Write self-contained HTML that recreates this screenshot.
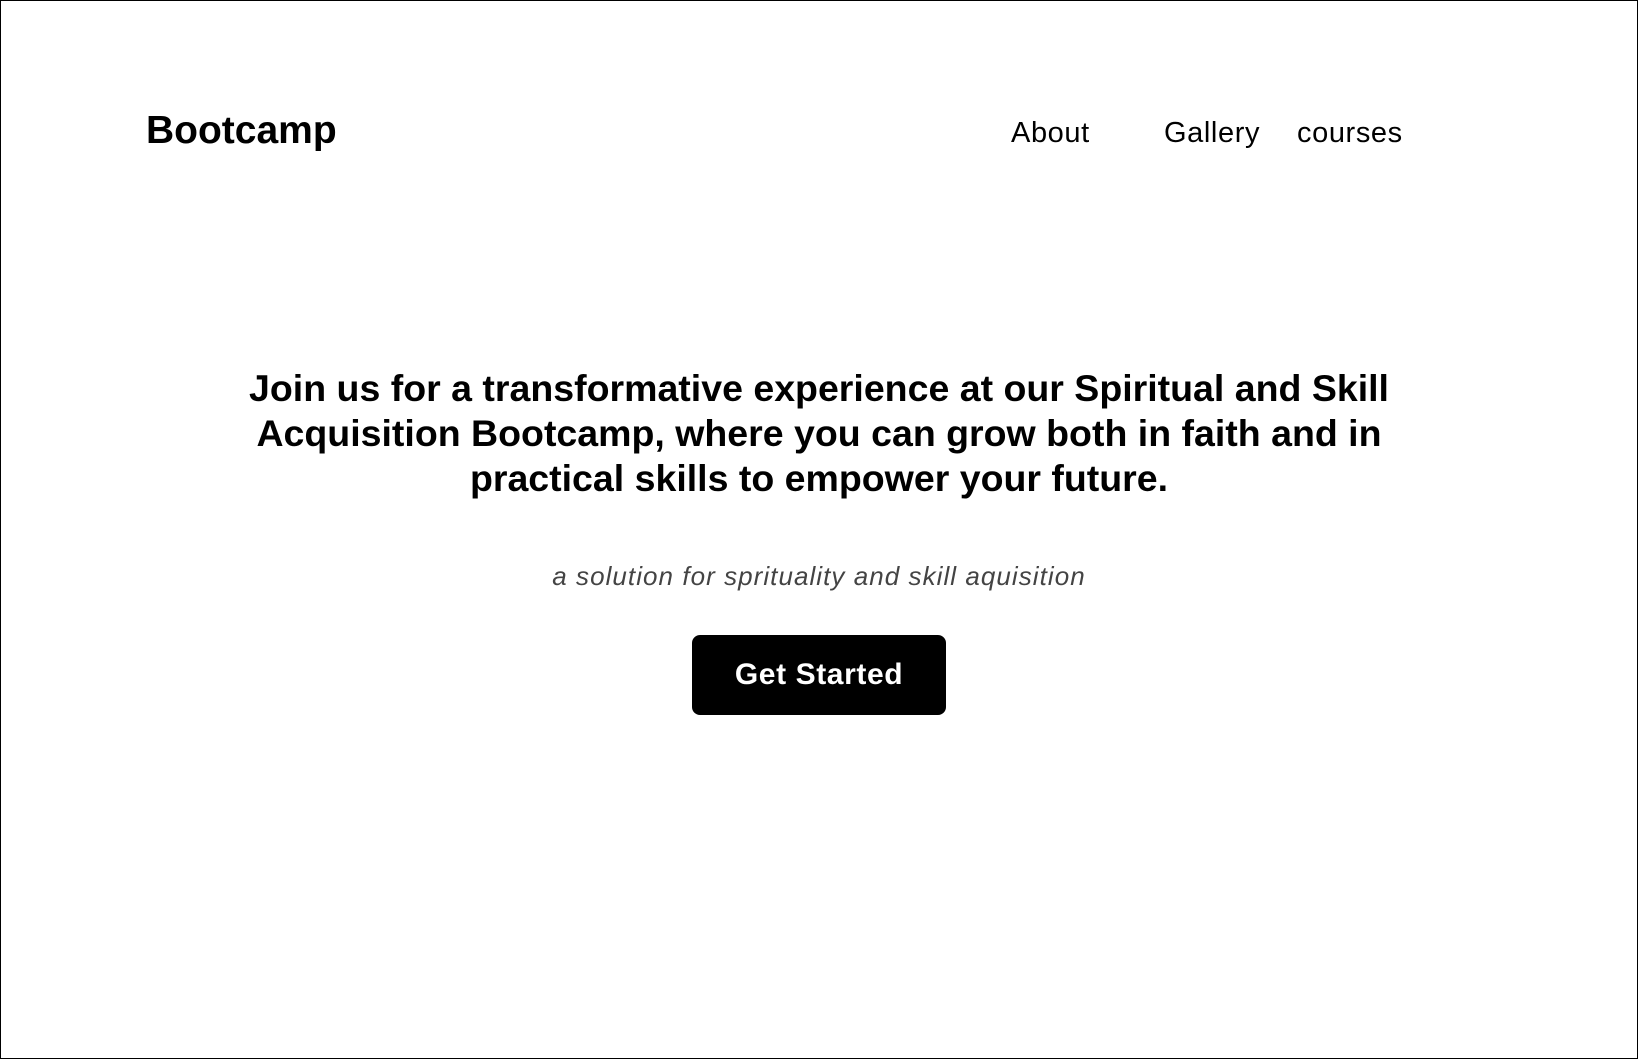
<!DOCTYPE html>
<html><head><meta charset="utf-8"><style>
html,body{margin:0;padding:0;background:#fff;}
body{width:1638px;height:1059px;position:relative;overflow:hidden;font-family:"Liberation Sans",sans-serif;color:#000;}
.frame{position:absolute;left:0;top:0;width:1636px;height:1057px;border:1px solid #000;}
.logo{position:absolute;left:146px;top:107px;font-size:39px;font-weight:bold;line-height:48px;}
.nav{position:absolute;top:115px;font-size:29px;line-height:36px;letter-spacing:0.6px;}
h1{position:absolute;left:0;width:1638px;top:366px;margin:0;text-align:center;font-size:37.5px;line-height:45px;font-weight:bold;}
.sub{position:absolute;left:0;width:1638px;top:561px;text-align:center;font-style:italic;font-size:26px;line-height:30px;color:#444;letter-spacing:1.05px;}
.btn{position:absolute;left:692px;top:635px;width:254px;height:80px;background:#000;border-radius:8px;color:#fff;font-weight:bold;font-size:30px;line-height:80px;text-align:center;letter-spacing:0.6px;}
</style></head><body>
<div class="frame"></div>
<div class="logo">Bootcamp</div>
<div class="nav" style="left:1011px">About</div>
<div class="nav" style="left:1164px">Gallery</div>
<div class="nav" style="left:1297px">courses</div>
<h1>Join us for a transformative experience at our Spiritual and Skill<br>Acquisition Bootcamp, where you can grow both in faith and in<br>practical skills to empower your future.</h1>
<div class="sub">a solution for sprituality and skill aquisition</div>
<div class="btn">Get Started</div>
</body></html>
